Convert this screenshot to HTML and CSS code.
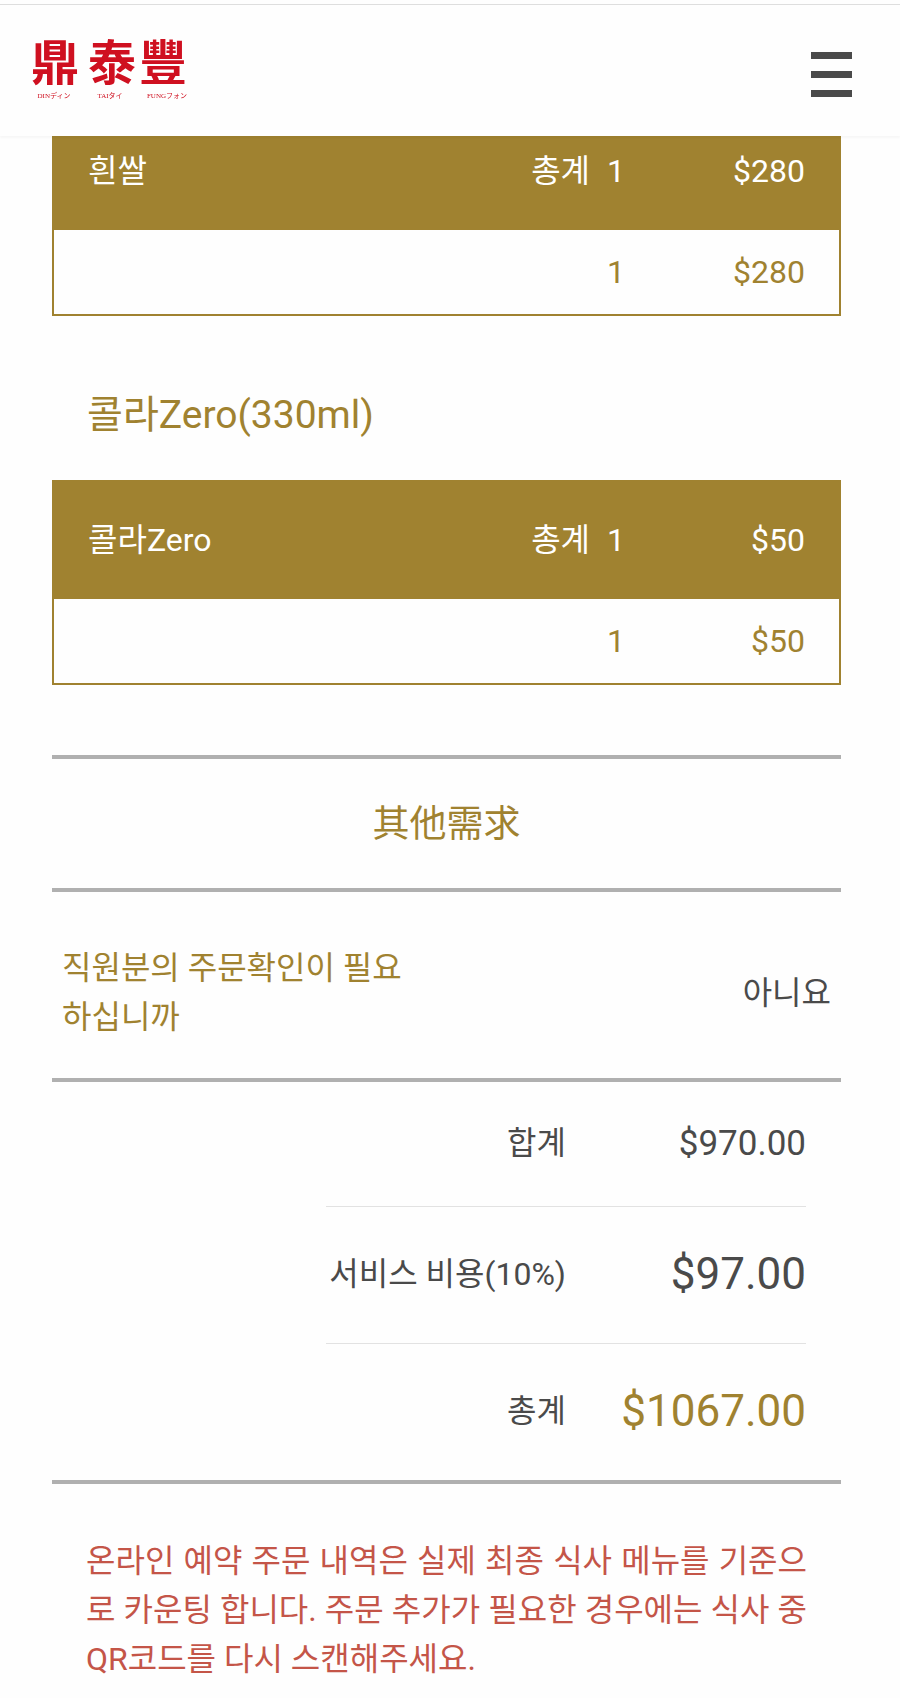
FILE: index.html
```html
<!DOCTYPE html>
<html lang="ko">

<head>
    <meta charset="UTF-8">
    <meta name="viewport" content="width=device-width, initial-scale=1.0">
    <title>鼎泰豐</title>
    <link rel="stylesheet" href="styles.css">
</head>

<body>
    <header class="header">
        <a class="logo" href="#" aria-label="鼎泰豐 DIN TAI FUNG">
            <svg width="164" height="92" viewBox="0 0 164 92">
                <g class="logo-name">
                    <text x="23" y="55">鼎</text>
                    <text x="80" y="55">泰</text>
                    <text x="131" y="55">豐</text>
                </g>
                <g class="logo-sub">
                    <text x="22" y="73">DINディン</text>
                    <text x="78" y="73">TAIタイ</text>
                    <text x="135" y="73">FUNGフォン</text>
                </g>
            </svg>
        </a>
        <button class="menu-btn" type="button" aria-label="메뉴">
            <span></span>
            <span></span>
            <span></span>
        </button>
    </header>

    <main class="content">
        <table class="item">
            <thead>
                <tr>
                    <th class="name">흰쌀</th>
                    <th class="qty"><span class="label">총계</span>1</th>
                    <th class="price">$280</th>
                </tr>
            </thead>
            <tbody>
                <tr>
                    <td class="name"></td>
                    <td class="qty">1</td>
                    <td class="price">$280</td>
                </tr>
            </tbody>
        </table>

        <h2 class="item-title">콜라Zero(330ml)</h2>
        <table class="item">
            <thead>
                <tr>
                    <th class="name">콜라Zero</th>
                    <th class="qty"><span class="label">총계</span>1</th>
                    <th class="price">$50</th>
                </tr>
            </thead>
            <tbody>
                <tr>
                    <td class="name"></td>
                    <td class="qty">1</td>
                    <td class="price">$50</td>
                </tr>
            </tbody>
        </table>

        <h2 class="other-title" lang="zh-Hant">其他需求</h2>
        <div class="other">
            <p class="question">직원분의 주문확인이 필요하십니까</p>
            <p class="answer">아니요</p>
        </div>

        <div class="total">
            <table class="total-table">
                <tr>
                    <th>합계</th>
                    <td class="subtotal">$970.00</td>
                </tr>
                <tr>
                    <th>서비스 비용(10%)</th>
                    <td>$97.00</td>
                </tr>
                <tr>
                    <th>총계</th>
                    <td class="sum">$1067.00</td>
                </tr>
            </table>
        </div>

        <p class="notice">온라인 예약 주문 내역은 실제 최종 식사 메뉴를 기준으로 카운팅 합니다. 주문 추가가 필요한 경우에는 식사 중 QR코드를 다시 스캔해주세요.</p>
    </main>
</body>

</html>
```
FILE: styles.css
```css
* {
    margin: 0;
    padding: 0;
    box-sizing: border-box;
}

body {
    background-color: #fefefe;
    color: #4a4a4a;
    font-family: Roboto, "Noto Sans CJK KR", sans-serif;
    font-size: 32px;
    line-height: 49px;
}

th,
h2 {
    font-weight: normal;
}

table {
    border-collapse: collapse;
}

/* header */
.header {
    position: fixed;
    top: 4px;
    left: 0;
    right: 0;
    z-index: 10;
    display: flex;
    justify-content: space-between;
    align-items: center;
    height: 132px;
    padding: 0 48px 0 32px;
    background-color: #fefefe;
    border-top: 1px solid #dedede;
    box-shadow: 0 2px 2px rgba(0, 0, 0, 0.03);
}

.logo svg {
    display: block;
}

.logo text {
    text-anchor: middle;
    fill: #cf1020;
}

.logo-name {
    font: bold 48px "Noto Sans CJK TC", sans-serif;
}

.logo-sub {
    font: 7px "Liberation Serif", "Noto Sans CJK JP", serif;
}

.menu-btn {
    display: flex;
    flex-direction: column;
    gap: 12px;
    width: 41px;
    padding-top: 8px;
    background: none;
    border: none;
    cursor: pointer;
}

.menu-btn span {
    width: 100%;
    height: 7px;
    background-color: #4a4a4a;
}

.content {
    padding: 111px 59px 15px 52px;
}

/* order items */
.item {
    width: 100%;
    border: 2px solid #a08230;
}

.item th {
    height: 118px;
    background-color: #a08230;
    color: #fff;
}

.item td {
    height: 85px;
    color: #a08230;
}

.item .name {
    padding-left: 34px;
    text-align: left;
}

.item .qty {
    width: 120px;
    text-align: right;
}

.item .label {
    margin-right: 17px;
}

.item .price {
    width: 215px;
    padding-right: 34px;
    text-align: right;
}

.item-title {
    padding: 75px 35px 40px;
    color: #a08230;
    font-size: 39px;
}

/* other requests */
.other-title {
    margin-top: 70px;
    padding: 38px 0 42px;
    border-top: 4px solid #b0b0b0;
    border-bottom: 4px solid #b0b0b0;
    color: #a08230;
    font-family: "Noto Sans CJK TC", sans-serif;
    font-size: 37px;
    text-align: center;
}

.other {
    display: flex;
    justify-content: space-between;
    align-items: center;
    padding: 52px 10px 36px;
    border-bottom: 4px solid #b0b0b0;
}

.question {
    width: 45%;
    color: #a08230;
    word-break: break-all;
}

/* total */
.total {
    padding: 0 35px;
    border-bottom: 4px solid #b0b0b0;
}

.total-table {
    margin-left: auto;
}

.total-table tr + tr {
    border-top: 1px solid #e2e2e2;
}

.total-table th,
.total-table td {
    height: 137px;
    text-align: right;
    white-space: nowrap;
}

.total-table th {
    min-width: 240px;
}

.total-table td {
    width: 240px;
    font-size: 44px;
}

.total-table tr:first-child > * {
    height: 124px;
}

.total-table .subtotal {
    font-size: 35px;
}

.total-table .sum {
    color: #a08230;
}

.notice {
    padding: 53px 34px 0;
    color: #c45548;
    text-align: justify;
    word-break: break-all;
}
```
